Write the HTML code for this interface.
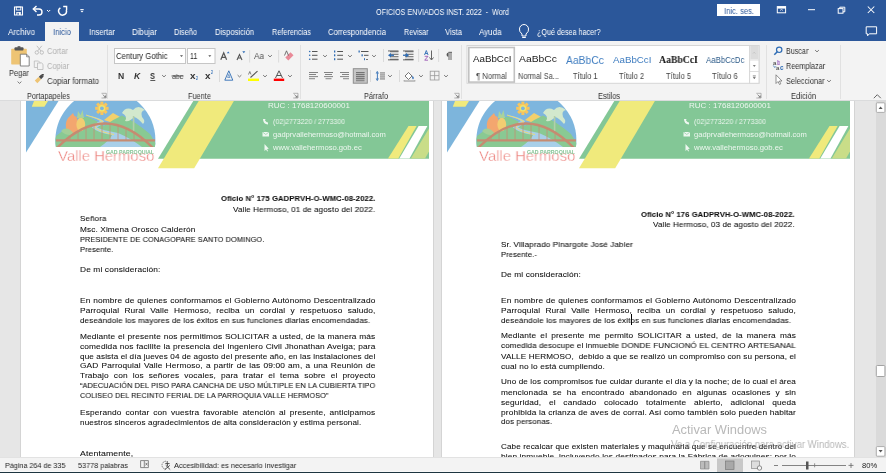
<!DOCTYPE html>
<html><head><meta charset="utf-8"><style>
html,body{margin:0;padding:0;width:886px;height:473px;overflow:hidden;background:#e6e6e6}
body{position:relative;font-family:"Liberation Sans",sans-serif}
.t{position:absolute;white-space:pre;transform-origin:0 0;will-change:transform}
</style></head><body>
<div style="position:absolute;left:0;top:0;width:886px;height:41px;background:#2b579a"></div><div style="position:absolute;left:45px;top:22px;width:34px;height:20px;background:#f3f3f3"></div><div style="position:absolute;left:717px;top:4px;width:43px;height:12px;background:#fff"></div><div style="position:absolute;left:0;top:41px;width:886px;height:60px;background:#f3f3f3"></div><div style="position:absolute;left:0;top:100px;width:886px;height:1px;background:#dadbdc"></div><div style="position:absolute;left:107px;top:45px;width:1px;height:54px;background:#e1e1e1"></div><div style="position:absolute;left:300px;top:45px;width:1px;height:54px;background:#e1e1e1"></div><div style="position:absolute;left:461px;top:45px;width:1px;height:54px;background:#e1e1e1"></div><div style="position:absolute;left:766px;top:45px;width:1px;height:54px;background:#e1e1e1"></div><div style="position:absolute;left:840px;top:45px;width:1px;height:54px;background:#e1e1e1"></div><div style="position:absolute;left:0;top:101px;width:886px;height:357px;background:#e6e6e6"></div><div style="position:absolute;left:20px;top:101px;width:414px;height:357px;background:#fff;border-left:1px solid #d4d4d4;border-right:1px solid #d4d4d4;box-sizing:border-box"></div><div style="position:absolute;left:441px;top:101px;width:414px;height:357px;background:#fff;border-left:1px solid #d4d4d4;border-right:1px solid #d4d4d4;box-sizing:border-box"></div><svg style="position:absolute;left:0;top:0" width="886" height="473" viewBox="0 0 886 473"><defs><clipPath id="docclip"><rect x="0" y="101" width="886" height="357"/></clipPath></defs><g clip-path="url(#docclip)"><g transform="translate(0,0)">
<polygon points="26,101 58.5,101 26,152.5" fill="#7db5dc"/>
<polygon points="34,101 48,101 44.4,106.7 31.8,106.7" fill="#f1ea7d"/>
<clipPath id="cc0"><rect x="40" y="95" width="130" height="52"/></clipPath><clipPath id="cd0"><circle cx="105.4" cy="140" r="50"/></clipPath>
<g clip-path="url(#cc0)">
<circle cx="105.4" cy="140" r="50" fill="#7eb6de"/><g clip-path="url(#cd0)">
<path d="M104 120 L113 113 L122 118 L113 123 Z" fill="#f3d06c"/>
<path d="M52 147 L56 136 Q66 128 76 122 Q84 116 88 117 Q96 120 104 126 Q112 120 122 115.5 Q136 122 150 134 L158 147 Z" fill="#89c993"/>
<path d="M86 115.5 Q96 118 100 121 Q94 124 92 127.5 Q98 133 112 135 Q110 140 100 147 L142 147 Q130 138 118 133 Q102 130 97 127.5 Q103 124 104 121 Q96 116 86 115.5 Z" fill="#a8cfe9"/>
<path d="M86 115 Q97 118 103 121.5 Q95 125 95 127.5 Q100 132 114 134.5" stroke="#f0dc6c" stroke-width="0.9" fill="none"/>
</g><rect x="105.60" y="106.80" width="3" height="3" fill="#f7c55e" transform="rotate(0 107.10 108.30)"/><rect x="104.08" y="110.48" width="3" height="3" fill="#f7c55e" transform="rotate(45 105.58 111.98)"/><rect x="100.40" y="112.00" width="3" height="3" fill="#f7c55e" transform="rotate(90 101.90 113.50)"/><rect x="96.72" y="110.48" width="3" height="3" fill="#f7c55e" transform="rotate(135 98.22 111.98)"/><rect x="95.20" y="106.80" width="3" height="3" fill="#f7c55e" transform="rotate(180 96.70 108.30)"/><rect x="96.72" y="103.12" width="3" height="3" fill="#f7c55e" transform="rotate(225 98.22 104.62)"/><rect x="100.40" y="101.60" width="3" height="3" fill="#f7c55e" transform="rotate(270 101.90 103.10)"/><rect x="104.08" y="103.12" width="3" height="3" fill="#f7c55e" transform="rotate(315 105.58 104.62)"/><circle cx="101.9" cy="108.3" r="4.6" fill="#f7c55e"/><circle cx="101.9" cy="108.3" r="3.2" fill="#f1e56b"/><circle cx="101.9" cy="108.3" r="1.9" fill="#7eb6de"/>
<path d="M68 118 Q72 114 73 113 Q75 118 76 116 Q79 122 78 131 Q72 136 67 131 Q64 124 68 118 Z" fill="#f3a66f"/>
<ellipse cx="80.8" cy="124.5" rx="4.4" ry="6.8" fill="#f2cd72"/>
<path d="M77 118 L78 111 L80.5 115 L82.5 110 L84 118 Z" fill="#a9d39c"/>
<path d="M61 131 Q67 125 74 134 Q67 137 61 131 Z" fill="#a3cf98"/>
<path d="M122 113 Q126 106 133 110 Q138 104 145 110 Q140 111 142 117 Q146 121 143 124 Q138 118 134 117 Q130 122 125 121 Q128 116 122 113 Z" fill="#d2e8cd"/>
<rect x="132.8" y="116" width="1.6" height="15" fill="#b2cfaa"/>
<path d="M57 148 Q105 99 153 148" stroke="#c68b71" stroke-width="2.4" fill="none"/>
<rect x="56" y="139.3" width="99" height="2.2" fill="#c68b71"/>
<path d="M70 136.8 V140 M78 131.6 V140 M86 127.8 V140 M94 125.3 V140 M102 124.1 V140 M110 124.3 V140 M118 125.8 V140 M126 128.6 V140 M134 132.8 V140 M142 138.3 V140 " stroke="#c68b71" stroke-width="0.75" fill="none"/>
</g>
<polygon points="193.3,101 429,101 429,158.7 158,158.7" fill="#83c796"/>
<polygon points="198.7,101 233.9,101 194.2,168.2 158,168.2" fill="#f0ea7c"/>
<polygon points="408.5,126 416.6,126 398.3,158.5 388,158.5" fill="#f0ea7c"/>
<polygon points="418.6,126 427.4,126 409.5,158.5 399.3,158.5" fill="#ffffff"/>
<polygon points="429,128.5 429,151.5 425,158.5 410.8,158.5" fill="#c9dd88"/>
<path d="M263 119 Q263 124 268 124.5 L268 122.5 L266.5 122 L265 120.5 L265.5 119 Z" fill="#eef7f0"/>
<rect x="262.5" y="132" width="6.5" height="4.5" fill="#eef7f0"/>
<path d="M262.5 132 L265.75 134.5 L269 132" stroke="#80c596" stroke-width="0.6" fill="none"/>
<path d="M264.5 144 L264.5 151 L266 149.5 L267.3 151.5 L268 151 L267 149 L268.8 148.8 Z" fill="#eef7f0"/>
</g><g transform="translate(421,0)">
<polygon points="26,101 58.5,101 26,152.5" fill="#7db5dc"/>
<polygon points="34,101 48,101 44.4,106.7 31.8,106.7" fill="#f1ea7d"/>
<clipPath id="cc421"><rect x="40" y="95" width="130" height="52"/></clipPath><clipPath id="cd421"><circle cx="105.4" cy="140" r="50"/></clipPath>
<g clip-path="url(#cc421)">
<circle cx="105.4" cy="140" r="50" fill="#7eb6de"/><g clip-path="url(#cd421)">
<path d="M104 120 L113 113 L122 118 L113 123 Z" fill="#f3d06c"/>
<path d="M52 147 L56 136 Q66 128 76 122 Q84 116 88 117 Q96 120 104 126 Q112 120 122 115.5 Q136 122 150 134 L158 147 Z" fill="#89c993"/>
<path d="M86 115.5 Q96 118 100 121 Q94 124 92 127.5 Q98 133 112 135 Q110 140 100 147 L142 147 Q130 138 118 133 Q102 130 97 127.5 Q103 124 104 121 Q96 116 86 115.5 Z" fill="#a8cfe9"/>
<path d="M86 115 Q97 118 103 121.5 Q95 125 95 127.5 Q100 132 114 134.5" stroke="#f0dc6c" stroke-width="0.9" fill="none"/>
</g><rect x="105.60" y="106.80" width="3" height="3" fill="#f7c55e" transform="rotate(0 107.10 108.30)"/><rect x="104.08" y="110.48" width="3" height="3" fill="#f7c55e" transform="rotate(45 105.58 111.98)"/><rect x="100.40" y="112.00" width="3" height="3" fill="#f7c55e" transform="rotate(90 101.90 113.50)"/><rect x="96.72" y="110.48" width="3" height="3" fill="#f7c55e" transform="rotate(135 98.22 111.98)"/><rect x="95.20" y="106.80" width="3" height="3" fill="#f7c55e" transform="rotate(180 96.70 108.30)"/><rect x="96.72" y="103.12" width="3" height="3" fill="#f7c55e" transform="rotate(225 98.22 104.62)"/><rect x="100.40" y="101.60" width="3" height="3" fill="#f7c55e" transform="rotate(270 101.90 103.10)"/><rect x="104.08" y="103.12" width="3" height="3" fill="#f7c55e" transform="rotate(315 105.58 104.62)"/><circle cx="101.9" cy="108.3" r="4.6" fill="#f7c55e"/><circle cx="101.9" cy="108.3" r="3.2" fill="#f1e56b"/><circle cx="101.9" cy="108.3" r="1.9" fill="#7eb6de"/>
<path d="M68 118 Q72 114 73 113 Q75 118 76 116 Q79 122 78 131 Q72 136 67 131 Q64 124 68 118 Z" fill="#f3a66f"/>
<ellipse cx="80.8" cy="124.5" rx="4.4" ry="6.8" fill="#f2cd72"/>
<path d="M77 118 L78 111 L80.5 115 L82.5 110 L84 118 Z" fill="#a9d39c"/>
<path d="M61 131 Q67 125 74 134 Q67 137 61 131 Z" fill="#a3cf98"/>
<path d="M122 113 Q126 106 133 110 Q138 104 145 110 Q140 111 142 117 Q146 121 143 124 Q138 118 134 117 Q130 122 125 121 Q128 116 122 113 Z" fill="#d2e8cd"/>
<rect x="132.8" y="116" width="1.6" height="15" fill="#b2cfaa"/>
<path d="M57 148 Q105 99 153 148" stroke="#c68b71" stroke-width="2.4" fill="none"/>
<rect x="56" y="139.3" width="99" height="2.2" fill="#c68b71"/>
<path d="M70 136.8 V140 M78 131.6 V140 M86 127.8 V140 M94 125.3 V140 M102 124.1 V140 M110 124.3 V140 M118 125.8 V140 M126 128.6 V140 M134 132.8 V140 M142 138.3 V140 " stroke="#c68b71" stroke-width="0.75" fill="none"/>
</g>
<polygon points="193.3,101 429,101 429,158.7 158,158.7" fill="#83c796"/>
<polygon points="198.7,101 233.9,101 194.2,168.2 158,168.2" fill="#f0ea7c"/>
<polygon points="408.5,126 416.6,126 398.3,158.5 388,158.5" fill="#f0ea7c"/>
<polygon points="418.6,126 427.4,126 409.5,158.5 399.3,158.5" fill="#ffffff"/>
<polygon points="429,128.5 429,151.5 425,158.5 410.8,158.5" fill="#c9dd88"/>
<path d="M263 119 Q263 124 268 124.5 L268 122.5 L266.5 122 L265 120.5 L265.5 119 Z" fill="#eef7f0"/>
<rect x="262.5" y="132" width="6.5" height="4.5" fill="#eef7f0"/>
<path d="M262.5 132 L265.75 134.5 L269 132" stroke="#80c596" stroke-width="0.6" fill="none"/>
<path d="M264.5 144 L264.5 151 L266 149.5 L267.3 151.5 L268 151 L267 149 L268.8 148.8 Z" fill="#eef7f0"/>
</g></g></svg><div style="position:absolute;left:876px;top:101px;width:10px;height:357px;background:#dadada"></div><div style="position:absolute;left:0;top:458px;width:886px;height:14px;background:#f3f3f3;z-index:2"></div><div style="position:absolute;left:0;top:457px;width:886px;height:1px;background:#e2e2e2;z-index:2"></div><div style="position:absolute;left:0;top:471px;width:886px;height:1px;background:#f8f8f8;z-index:2"></div><div style="position:absolute;left:0;top:472px;width:886px;height:1px;background:#1d3540;z-index:2"></div><svg style="position:absolute;left:0;top:0" width="886" height="473" viewBox="0 0 886 473"><path d="M14.5 7 H22.5 V15 H14.5 Z" stroke="#ffffff" stroke-width="1.1" fill="none"/><rect x="16.3" y="7" width="4.5" height="3" stroke="#ffffff" stroke-width="0.9" fill="none"/><rect x="16.3" y="12" width="4.5" height="3" fill="#ffffff"/><rect x="17.5" y="12.8" width="1.2" height="2" fill="#2b579a"/><path d="M34 9 H39 A3 3 0 0 1 39 15 H37" stroke="#ffffff" stroke-width="1.4" fill="none"/><path d="M36.5 6 L33.3 9 L36.5 12" stroke="#ffffff" stroke-width="1.4" fill="none"/><path d="M47 10 L48.6 11.6 L50.2 10" stroke="#ffffff" stroke-width="1" fill="none"/><path d="M60.4 7.9 A3.9 3.9 0 1 0 66.3 10" stroke="#ffffff" stroke-width="1.5" fill="none"/><path d="M63.2 6.5 H66.6 V10" stroke="#ffffff" stroke-width="1.4" fill="none"/><rect x="80.3" y="9" width="3.4" height="0.9" fill="#ffffff"/><path d="M80.3 10.8 L83.7 10.8 L82 12.5 Z" fill="#ffffff"/><rect x="777.3" y="6.6" width="8.3" height="6.2" stroke="#ffffff" stroke-width="1" fill="none"/><rect x="777.3" y="6.6" width="8.3" height="2" fill="#ffffff"/><path d="M780 10.5 L781.5 9.5 L783 10.5" stroke="#ffffff" stroke-width="0.7" fill="none"/><rect x="808" y="9.2" width="7" height="1" fill="#ffffff"/><rect x="838.2" y="8.6" width="4.8" height="4.6" stroke="#ffffff" stroke-width="1" fill="none"/><path d="M839.8 8.6 V7.2 H844.8 V11.8 H843" stroke="#ffffff" stroke-width="1" fill="none"/><path d="M867.8 6.5 L874.3 13 M874.3 6.5 L867.8 13" stroke="#ffffff" stroke-width="1.05" fill="none"/><path d="M866.2 26.8 H876.6 V33.8 H869.3 L867.6 35.8 V33.8 H866.2 Z" stroke="#ffffff" stroke-width="1" fill="none"/><path d="M522 36 V34 Q519 31.5 519.5 29 A4.5 4.5 0 0 1 528.5 29 Q529 31.5 526 34 V36 Z" stroke="#ffffff" stroke-width="1" fill="none"/><rect x="522.2" y="37" width="3.6" height="1" fill="#ffffff"/><rect x="11.2" y="48.8" width="15.6" height="15.6" rx="0.6" fill="#eec474"/><rect x="14.5" y="47.2" width="9" height="3.2" rx="1" fill="#555"/><rect x="17.6" y="46.2" width="2.8" height="1.6" fill="#555"/><path d="M20.3 54.2 H26.6 L29.2 56.8 V66 H20.3 Z" fill="#fff" stroke="#6a6a6a" stroke-width="0.8"/><path d="M26.6 54.2 V56.8 H29.2" fill="none" stroke="#6a6a6a" stroke-width="0.7"/><path d="M17.6 81.6 L19.5 83.4 L21.4 81.6" stroke="#666" stroke-width="0.85" fill="none"/><circle cx="36.8" cy="52.5" r="1.7" stroke="#b9b9b9" stroke-width="0.9" fill="none"/><circle cx="41.8" cy="52.5" r="1.7" stroke="#b9b9b9" stroke-width="0.9" fill="none"/><path d="M37.6 51 L41.8 45.8 M41 51 L36.8 45.8" stroke="#b9b9b9" stroke-width="0.9" fill="none"/><path d="M34.3 61 H38.5 L39.8 62.3 V67.5 H34.3 Z" stroke="#b9b9b9" stroke-width="0.8" fill="#f3f3f3"/><path d="M37.5 63 H41.7 L43 64.3 V69.5 H37.5 Z" stroke="#b9b9b9" stroke-width="0.8" fill="#f3f3f3"/><path d="M34.8 80.5 L38.5 77 L41 79.6 L37.3 83.2 Z" fill="#eec474"/><path d="M38.8 76.8 L41.5 74.2 L43.7 76.4 L41.1 79.2 Z" fill="#4a4a4a"/><rect x="42" y="74" width="1.8" height="1.6" fill="#4a4a4a"/><path d="M101.5 93.3 H106.3 V98 H101.5" stroke="#888" stroke-width="0.6" fill="none"/><path d="M102.7 94.6 L105.5 97.2 M105.5 95.5 V97.2 H103.8" stroke="#666" stroke-width="0.7" fill="none"/><path d="M293.2 93.3 H298.0 V98 H293.2" stroke="#888" stroke-width="0.6" fill="none"/><path d="M294.4 94.6 L297.2 97.2 M297.2 95.5 V97.2 H295.5" stroke="#666" stroke-width="0.7" fill="none"/><path d="M454.3 93.3 H459.1 V98 H454.3" stroke="#888" stroke-width="0.6" fill="none"/><path d="M455.5 94.6 L458.3 97.2 M458.3 95.5 V97.2 H456.6" stroke="#666" stroke-width="0.7" fill="none"/><path d="M756.3 93.3 H761.0999999999999 V98 H756.3" stroke="#888" stroke-width="0.6" fill="none"/><path d="M757.5 94.6 L760.3 97.2 M760.3 95.5 V97.2 H758.5999999999999" stroke="#666" stroke-width="0.7" fill="none"/><rect x="114.5" y="48.5" width="71" height="15" fill="#fff" stroke="#c6c6c6" stroke-width="1"/><rect x="187.5" y="48.5" width="27.5" height="15" fill="#fff" stroke="#c6c6c6" stroke-width="1"/><path d="M180 55.3 H183 L181.5 57 Z" fill="#555"/><path d="M208.3 55.3 H211.3 L209.8 57 Z" fill="#555"/><path d="M220.8 59.8 L223.7 52.8 L226.6 59.8 M221.9 57.4 H225.5" stroke="#555" stroke-width="1.2" fill="none"/><path d="M226.8 53.3 L228.2 51.4 L229.6 53.3 Z" fill="#2f6db5"/><path d="M237 60 L239.5 54.5 L242 60 M238 58 H241" stroke="#555" stroke-width="1.1" fill="none"/><path d="M242.3 51.3 H245.3 L243.8 53.3 Z" fill="#2f6db5"/><rect x="249.3" y="50" width="0.8" height="12.5" fill="#d4d4d4"/><rect x="278.3" y="50" width="0.8" height="12.5" fill="#d4d4d4"/><path d="M268.1 55.1 L270 56.9 L271.9 55.1" stroke="#666" stroke-width="0.85" fill="none"/><path d="M285.3 57.5 L290.5 52.3 L293.5 55.3 L288.3 60.5 Z" fill="#e98a98"/><path d="M284.5 55.5 L286.5 50.8 L288.5 55.5" stroke="#555" stroke-width="0.8" fill="none"/><rect x="150.3" y="80" width="5" height="0.8" fill="#333"/><path d="M162.1 75.1 L164 76.9 L165.9 75.1" stroke="#666" stroke-width="0.85" fill="none"/><rect x="171.5" y="75.6" width="12" height="0.8" fill="#444"/><rect x="219" y="70" width="0.8" height="12" fill="#d4d4d4"/><path d="M224.8 80.2 L228.8 70.8 L232.8 80.2 Z" stroke="#2f6db5" stroke-width="0.9" fill="none" stroke-linejoin="round"/><path d="M227.6 77.5 L228.8 74.3 L230 77.5 Z" stroke="#2f6db5" stroke-width="0.6" fill="none"/><path d="M237.6 75.1 L239.5 76.9 L241.4 75.1" stroke="#666" stroke-width="0.85" fill="none"/><rect x="248" y="78.6" width="11" height="2.4" fill="#ffff00"/><path d="M250.5 77.5 L257.5 71.2" stroke="#555" stroke-width="1.1" fill="none"/><path d="M248.5 74.5 L249.8 71.5 L251 74.5" stroke="#555" stroke-width="0.7" fill="none"/><path d="M263.1 75.1 L265 76.9 L266.9 75.1" stroke="#666" stroke-width="0.85" fill="none"/><rect x="273.8" y="78.6" width="10.4" height="2.4" fill="#ff0000"/><path d="M275.5 78 L279 70.8 L282.5 78 M276.8 75.5 H281.2" stroke="#555" stroke-width="1" fill="none"/><path d="M288.1 75.1 L290 76.9 L291.9 75.1" stroke="#666" stroke-width="0.85" fill="none"/><circle cx="309.7" cy="51.5" r="0.8" fill="#2f6db5"/><rect x="312" y="51.0" width="5.5" height="1" fill="#555"/><rect x="334" y="50.5" width="1.3" height="2" fill="#2f6db5"/><rect x="337.2" y="51.0" width="5.8" height="1" fill="#555"/><circle cx="309.7" cy="55.3" r="0.8" fill="#2f6db5"/><rect x="312" y="54.8" width="5.5" height="1" fill="#555"/><rect x="334" y="54.3" width="1.3" height="2" fill="#2f6db5"/><rect x="337.2" y="54.8" width="5.8" height="1" fill="#555"/><circle cx="309.7" cy="59.2" r="0.8" fill="#2f6db5"/><rect x="312" y="58.7" width="5.5" height="1" fill="#555"/><rect x="334" y="58.2" width="1.3" height="2" fill="#2f6db5"/><rect x="337.2" y="58.7" width="5.8" height="1" fill="#555"/><rect x="358.5" y="50.5" width="1.3" height="2" fill="#2f6db5"/><rect x="361" y="51" width="7.5" height="1" fill="#555"/><rect x="361.5" y="54.3" width="1.3" height="2" fill="#2f6db5"/><rect x="364" y="54.8" width="4.5" height="1" fill="#555"/><rect x="364" y="58.2" width="1" height="2" fill="#2f6db5"/><rect x="366" y="59" width="2" height="0.8" fill="#555"/><path d="M323.1 55.1 L325 56.9 L326.9 55.1" stroke="#666" stroke-width="0.85" fill="none"/><path d="M348.1 55.1 L350 56.9 L351.9 55.1" stroke="#666" stroke-width="0.85" fill="none"/><path d="M372.1 55.1 L374 56.9 L375.9 55.1" stroke="#666" stroke-width="0.85" fill="none"/><rect x="383" y="49" width="0.8" height="13" fill="#d4d4d4"/><rect x="390" y="51.3" width="8.5" height="0.9" fill="#555"/><rect x="390" y="53.8" width="8.5" height="0.9" fill="#555"/><rect x="390" y="56.3" width="8.5" height="0.9" fill="#555"/><rect x="390" y="58.8" width="8.5" height="0.9" fill="#555"/><rect x="388" y="50.5" width="10.5" height="0.9" fill="#555"/><rect x="388" y="59.4" width="10.5" height="0.9" fill="#555"/><path d="M388 55.2 L391 53 V57.4 Z" fill="#2f6db5"/><rect x="390" y="54.6" width="4" height="1.3" fill="#2f6db5"/><rect x="405" y="51.3" width="8.5" height="0.9" fill="#555"/><rect x="405" y="53.8" width="8.5" height="0.9" fill="#555"/><rect x="405" y="56.3" width="8.5" height="0.9" fill="#555"/><rect x="405" y="58.8" width="8.5" height="0.9" fill="#555"/><rect x="403" y="50.5" width="10.5" height="0.9" fill="#555"/><rect x="403" y="59.4" width="10.5" height="0.9" fill="#555"/><path d="M409 55.2 L406 53 V57.4 Z" fill="#2f6db5"/><rect x="403" y="54.6" width="4" height="1.3" fill="#2f6db5"/><rect x="418.3" y="49" width="0.8" height="13" fill="#d4d4d4"/><path d="M424.5 55 L426.3 50.5 L428.1 55 M425.2 53.5 H427.4" stroke="#2f6db5" stroke-width="0.9" fill="none"/><path d="M424.7 56.3 H428 L424.7 60.2 H428" stroke="#9b59b6" stroke-width="0.9" fill="none"/><path d="M431.5 50.5 V59.5 M429.5 57.5 L431.5 60 L433.5 57.5" stroke="#555" stroke-width="0.9" fill="none"/><rect x="438.3" y="49" width="0.8" height="13" fill="#d4d4d4"/><path d="M448.3 52.5 A2.2 2.2 0 0 0 448.3 56.8 Z" fill="#555"/><path d="M448.5 52.3 H452 M449 52.3 V60 M451 52.3 V60" stroke="#555" stroke-width="0.9" fill="none"/><rect x="309" y="72.0" width="9" height="0.9" fill="#777"/><rect x="309" y="74.1" width="7" height="0.9" fill="#777"/><rect x="309" y="76.2" width="9" height="0.9" fill="#777"/><rect x="309" y="78.3" width="6" height="0.9" fill="#777"/><rect x="324" y="72.0" width="9" height="0.9" fill="#777"/><rect x="325" y="74.1" width="7" height="0.9" fill="#777"/><rect x="324" y="76.2" width="9" height="0.9" fill="#777"/><rect x="325.5" y="78.3" width="6" height="0.9" fill="#777"/><rect x="340" y="72.0" width="9" height="0.9" fill="#777"/><rect x="342" y="74.1" width="7" height="0.9" fill="#777"/><rect x="340" y="76.2" width="9" height="0.9" fill="#777"/><rect x="343" y="78.3" width="6" height="0.9" fill="#777"/><rect x="353.3" y="68.7" width="14" height="14.5" fill="#c6c6c6" stroke="#8f8f8f" stroke-width="1"/><rect x="356" y="72.0" width="8.5" height="0.9" fill="#777"/><rect x="356" y="74.1" width="8.5" height="0.9" fill="#777"/><rect x="356" y="76.2" width="8.5" height="0.9" fill="#777"/><rect x="356" y="78.3" width="8.5" height="0.9" fill="#777"/><rect x="356" y="72.3" width="8.5" height="0.9" fill="#6f6f6f"/><rect x="356" y="74.3" width="8.5" height="0.9" fill="#6f6f6f"/><rect x="356" y="76.3" width="8.5" height="0.9" fill="#6f6f6f"/><rect x="356" y="78.3" width="8.5" height="0.9" fill="#6f6f6f"/><rect x="356" y="80.3" width="8.5" height="0.9" fill="#6f6f6f"/><rect x="370" y="70" width="0.8" height="12" fill="#d4d4d4"/><path d="M376.3 73.5 L377.3 71.5 L378.3 73.5 M376.3 78.5 L377.3 80.5 L378.3 78.5" stroke="#2f6db5" stroke-width="1" fill="none"/><rect x="376.9" y="73" width="0.9" height="6" fill="#2f6db5"/><rect x="380" y="72.5" width="5" height="0.9" fill="#666"/><rect x="380" y="74.5" width="5" height="0.9" fill="#666"/><rect x="380" y="76.5" width="5" height="0.9" fill="#666"/><rect x="380" y="78.5" width="5" height="0.9" fill="#666"/><path d="M388.1 75.1 L390 76.9 L391.9 75.1" stroke="#666" stroke-width="0.85" fill="none"/><rect x="399" y="70" width="0.8" height="12" fill="#d4d4d4"/><path d="M405 76 L408.5 72.5 L412 76 L408.5 79.5 Z" stroke="#555" stroke-width="0.8" fill="#fff"/><path d="M412.5 75.5 Q414.5 77.5 413 79.5 Q411.5 78 412.5 75.5Z" fill="#2f6db5"/><rect x="404" y="80.3" width="11" height="1.3" fill="#fff" stroke="#888" stroke-width="0.5"/><path d="M419.1 75.1 L421 76.9 L422.9 75.1" stroke="#666" stroke-width="0.85" fill="none"/><rect x="430.2" y="71.2" width="8.8" height="8.8" stroke="#999" stroke-width="0.8" fill="none"/><path d="M434.6 71.2 V80 M430.2 75.6 H439" stroke="#999" stroke-width="0.8"/><path d="M444.1 75.1 L446 76.9 L447.9 75.1" stroke="#666" stroke-width="0.85" fill="none"/><rect x="467" y="45.5" width="292" height="37.8" fill="#fff" stroke="#d6d6d6" stroke-width="1"/><rect x="468.8" y="47.5" width="45.5" height="34.6" fill="#fff" stroke="#c2c2c2" stroke-width="1.6"/><rect x="749.6" y="45.5" width="9.4" height="37.8" fill="#fff" stroke="#d6d6d6" stroke-width="1"/><rect x="750.2" y="46" width="8.4" height="13.3" fill="#dcdcdc"/><path d="M753 53.5 L754.2 52.3 L755.4 53.5" stroke="#b4b4b4" stroke-width="0.6" fill="none"/><rect x="749.6" y="59.6" width="9.4" height="0.8" fill="#d6d6d6"/><rect x="749.6" y="71.2" width="9.4" height="0.8" fill="#d6d6d6"/><path d="M752.8 65.2 H755.8 L754.3 66.8 Z" fill="#555"/><rect x="752.8" y="75.6" width="3" height="0.7" fill="#555"/><path d="M752.8 77.3 H755.8 L754.3 78.9 Z" fill="#555"/><circle cx="779.2" cy="49.8" r="2.7" stroke="#2f6db5" stroke-width="1.2" fill="none"/><path d="M777.3 51.8 L774.3 54.7" stroke="#2f6db5" stroke-width="1.5"/><path d="M815.1 50.1 L817 51.9 L818.9 50.1" stroke="#666" stroke-width="0.85" fill="none"/><path d="M773.3 65.5 L774.8 67.5 L776 66.3" stroke="#2f6db5" stroke-width="0.8" fill="none"/><path d="M827.1 80.1 L829 81.9 L830.9 80.1" stroke="#666" stroke-width="0.85" fill="none"/><path d="M776 74.8 V83.5 L778 81.5 L779.5 84.5 L780.8 83.8 L779.4 81 H782 Z" stroke="#666" stroke-width="0.7" fill="#fff"/><path d="M873.8 98.2 L877.3 94.7 L880.8 98.2" stroke="#555" stroke-width="0.9" fill="none"/></svg><svg style="position:absolute;left:0;top:0;z-index:3" width="886" height="473" viewBox="0 0 886 473"><path d="M140.6 460.6 H144.3 V467.6 H140.6 Z M144.3 460.6 H148.4 V467.6 H144.3" stroke="#666" stroke-width="0.75" fill="none"/><path d="M145.6 462.8 L147.4 465.4 M147.4 462.8 L145.6 465.4" stroke="#555" stroke-width="0.7"/><path d="M166 461.2 A4 4 0 0 0 166 469.2" stroke="#666" stroke-width="0.8" fill="none" stroke-dasharray="1.6 0.7"/><circle cx="167.3" cy="462" r="0.8" fill="#444"/><path d="M165.3 463.6 L169.6 463.6 M167.4 463.4 L167.4 466 M164.8 469.6 L169.8 465.4 M165.8 465.4 L170.2 469.6" stroke="#333" stroke-width="0.85" fill="none"/><rect x="717" y="458.5" width="26" height="13.5" fill="#c8c8c8"/><path d="M700.5 461.3 H704.7 V469 H700.5 Z M704.7 461.3 H709 V469 H704.7 Z" stroke="#8a8a8a" stroke-width="0.7" fill="#bbb"/><rect x="725.5" y="461" width="8.5" height="8.5" stroke="#7a7a7a" stroke-width="0.7" fill="#a8a8a8"/><rect x="751.5" y="461" width="8" height="7.5" stroke="#8a8a8a" stroke-width="0.7" fill="#ddd"/><circle cx="759.5" cy="468" r="2.2" stroke="#666" stroke-width="0.7" fill="#f3f3f3"/><rect x="774" y="465" width="4" height="0.8" fill="#666"/><rect x="782" y="465" width="64" height="0.9" fill="#777"/><rect x="806" y="461.5" width="2.5" height="8" fill="#555"/><rect x="814.3" y="463.3" width="0.8" height="4" fill="#777"/><path d="M848.5 465.4 H853.5 M851 463 V468" stroke="#666" stroke-width="0.8"/><rect x="876.3" y="102.8" width="8.6" height="9.6" rx="1" fill="#fff" stroke="#9a9a9a" stroke-width="0.8"/><path d="M878.6 109 L880.6 106.5 L882.6 109 Z" fill="#555"/><rect x="876.3" y="446.6" width="8.6" height="9.6" rx="1" fill="#fff" stroke="#9a9a9a" stroke-width="0.8"/><path d="M878.6 450 L880.6 452.5 L882.6 450 Z" fill="#555"/><rect x="876.3" y="365.5" width="8.6" height="11" rx="1" fill="#fff" stroke="#9a9a9a" stroke-width="0.9"/></svg><div style="position:absolute;left:631px;top:314px;width:1px;height:11px;background:#000"></div>
<div class="t" style="left:376.00px;top:7.00px;font-size:8.6px;line-height:10.75px;color:#fff;transform:scaleX(0.8321);">OFICIOS ENVIADOS INST. 2022  -  Word</div><div class="t" style="left:8.00px;top:27.00px;font-size:8.6px;line-height:10.75px;color:#fff;transform:scaleX(0.9422);">Archivo</div><div class="t" style="left:88.50px;top:27.00px;font-size:8.6px;line-height:10.75px;color:#fff;transform:scaleX(0.8922);">Insertar</div><div class="t" style="left:131.50px;top:27.00px;font-size:8.6px;line-height:10.75px;color:#fff;transform:scaleX(0.9180);">Dibujar</div><div class="t" style="left:174.00px;top:27.00px;font-size:8.6px;line-height:10.75px;color:#fff;transform:scaleX(0.8593);">Diseño</div><div class="t" style="left:215.00px;top:27.00px;font-size:8.6px;line-height:10.75px;color:#fff;transform:scaleX(0.8873);">Disposición</div><div class="t" style="left:272.00px;top:27.00px;font-size:8.6px;line-height:10.75px;color:#fff;transform:scaleX(0.8504);">Referencias</div><div class="t" style="left:328.00px;top:27.00px;font-size:8.6px;line-height:10.75px;color:#fff;transform:scaleX(0.8861);">Correspondencia</div><div class="t" style="left:404.00px;top:27.00px;font-size:8.6px;line-height:10.75px;color:#fff;transform:scaleX(0.8408);">Revisar</div><div class="t" style="left:445.00px;top:27.00px;font-size:8.6px;line-height:10.75px;color:#fff;transform:scaleX(0.8969);">Vista</div><div class="t" style="left:479.00px;top:27.00px;font-size:8.6px;line-height:10.75px;color:#fff;transform:scaleX(0.9290);">Ayuda</div><div class="t" style="left:537.00px;top:27.00px;font-size:8.6px;line-height:10.75px;color:#fff;transform:scaleX(0.8359);">¿Qué desea hacer?</div><div class="t" style="left:53.00px;top:27.00px;font-size:8.6px;line-height:10.75px;color:#2b579a;transform:scaleX(0.8972);">Inicio</div><div class="t" style="left:724.00px;top:6.00px;font-size:8.6px;line-height:10.75px;color:#2b579a;transform:scaleX(0.8844);">Inic. ses.</div><div class="t" style="left:27.00px;top:91.00px;font-size:8.6px;line-height:10.75px;color:#333;transform:scaleX(0.8489);">Portapapeles</div><div class="t" style="left:188.00px;top:91.00px;font-size:8.6px;line-height:10.75px;color:#333;transform:scaleX(0.8593);">Fuente</div><div class="t" style="left:364.00px;top:91.00px;font-size:8.6px;line-height:10.75px;color:#333;transform:scaleX(0.8514);">Párrafo</div><div class="t" style="left:598.00px;top:91.00px;font-size:8.6px;line-height:10.75px;color:#333;transform:scaleX(0.8691);">Estilos</div><div class="t" style="left:791.00px;top:91.00px;font-size:8.6px;line-height:10.75px;color:#333;transform:scaleX(0.8869);">Edición</div><div class="t" style="left:9.00px;top:68.00px;font-size:8.6px;line-height:10.75px;color:#333;transform:scaleX(0.8719);">Pegar</div><div class="t" style="left:47.00px;top:46.00px;font-size:8.6px;line-height:10.75px;color:#b1b1b1;transform:scaleX(0.8790);">Cortar</div><div class="t" style="left:47.00px;top:61.00px;font-size:8.6px;line-height:10.75px;color:#b1b1b1;transform:scaleX(0.8686);">Copiar</div><div class="t" style="left:47.00px;top:76.00px;font-size:8.6px;line-height:10.75px;color:#333;transform:scaleX(0.9148);">Copiar formato</div><div class="t" style="left:785.80px;top:46.00px;font-size:8.6px;line-height:10.75px;color:#333;transform:scaleX(0.8336);">Buscar</div><div class="t" style="left:785.80px;top:61.00px;font-size:8.6px;line-height:10.75px;color:#333;transform:scaleX(0.8437);">Reemplazar</div><div class="t" style="left:785.80px;top:76.00px;font-size:8.6px;line-height:10.75px;color:#333;transform:scaleX(0.8596);">Seleccionar</div><div class="t" style="left:267.60px;top:101.00px;font-size:7.7px;line-height:9.625px;color:#eef7f0;transform:scaleX(1.0425);">RUC : 1768120600001</div><div class="t" style="left:273.30px;top:117.00px;font-size:7.2px;line-height:9.0px;color:#eef7f0;transform:scaleX(0.9632);">(02)2773220 / 2773300</div><div class="t" style="left:273.30px;top:130.00px;font-size:7.2px;line-height:9.0px;color:#eef7f0;transform:scaleX(1.0525);">gadprvallehermoso@hotmail.com</div><div class="t" style="left:273.30px;top:143.00px;font-size:7.2px;line-height:9.0px;color:#eef7f0;transform:scaleX(1.0635);">www.vallehermoso.gob.ec</div><div class="t" style="left:57.60px;top:147.00px;font-size:15px;line-height:18.75px;color:#ec827d;transform:scaleX(0.9901);-webkit-text-stroke:0.35px #fff">Valle Hermoso</div><div class="t" style="left:106.40px;top:150.00px;font-size:4.8px;line-height:6.0px;color:#86c596;transform:scaleX(1.0936);font-weight:bold">GAD PARROQUIAL</div><div class="t" style="left:688.60px;top:101.00px;font-size:7.7px;line-height:9.625px;color:#eef7f0;transform:scaleX(1.0425);">RUC : 1768120600001</div><div class="t" style="left:694.30px;top:117.00px;font-size:7.2px;line-height:9.0px;color:#eef7f0;transform:scaleX(0.9632);">(02)2773220 / 2773300</div><div class="t" style="left:694.30px;top:130.00px;font-size:7.2px;line-height:9.0px;color:#eef7f0;transform:scaleX(1.0525);">gadprvallehermoso@hotmail.com</div><div class="t" style="left:694.30px;top:143.00px;font-size:7.2px;line-height:9.0px;color:#eef7f0;transform:scaleX(1.0635);">www.vallehermoso.gob.ec</div><div class="t" style="left:478.60px;top:147.00px;font-size:15px;line-height:18.75px;color:#ec827d;transform:scaleX(0.9901);-webkit-text-stroke:0.35px #fff">Valle Hermoso</div><div class="t" style="left:527.40px;top:150.00px;font-size:4.8px;line-height:6.0px;color:#86c596;transform:scaleX(1.0936);font-weight:bold">GAD PARROQUIAL</div><div class="t" style="left:5.00px;top:461.00px;font-size:7.6px;line-height:9.5px;color:#222;transform:scaleX(0.9472);z-index:3">Página 264 de 335</div><div class="t" style="left:77.60px;top:461.00px;font-size:7.6px;line-height:9.5px;color:#222;transform:scaleX(0.9549);z-index:3">53778 palabras</div><div class="t" style="left:174.40px;top:461.00px;font-size:7.6px;line-height:9.5px;color:#222;transform:scaleX(0.9690);z-index:3">Accesibilidad: es necesario investigar</div><div class="t" style="left:862.00px;top:461.00px;font-size:7.6px;line-height:9.5px;color:#222;transform:scaleX(0.9866);z-index:3">80%</div><div class="t" style="left:116.20px;top:51.00px;font-size:8.6px;line-height:10.75px;color:#222;transform:scaleX(0.9001);">Century Gothic</div><div class="t" style="left:190.00px;top:51.00px;font-size:8.6px;line-height:10.75px;color:#222;transform:scaleX(0.8070);">11</div><div class="t" style="left:254.00px;top:51.00px;font-size:8.6px;line-height:10.75px;color:#555;transform:scaleX(0.9510);">Aa</div><div class="t" style="left:118.00px;top:71.00px;font-size:8.6px;line-height:10.75px;color:#333;transform:scaleX(0.9970);font-weight:bold">N</div><div class="t" style="left:133.80px;top:71.00px;font-size:8.6px;line-height:10.75px;color:#333;transform:scaleX(0.9327);font-weight:bold;font-style:italic">K</div><div class="t" style="left:150.30px;top:71.00px;font-size:8.6px;line-height:10.75px;color:#333;transform:scaleX(0.8719);font-weight:bold">S</div><div class="t" style="left:172.00px;top:72.00px;font-size:8px;line-height:10.0px;color:#444;transform:scaleX(0.8934);letter-spacing:-0.2px">abc</div><div class="t" style="left:190.00px;top:71.00px;font-size:8.5px;line-height:10.625px;color:#333;transform:scaleX(1.1617);font-weight:bold">x</div><div class="t" style="left:196.00px;top:76.00px;font-size:4.5px;line-height:5.625px;color:#2f6db5;transform:scaleX(0.7950);font-weight:bold">2</div><div class="t" style="left:205.00px;top:71.00px;font-size:8.5px;line-height:10.625px;color:#333;transform:scaleX(1.1617);font-weight:bold">x</div><div class="t" style="left:211.00px;top:70.00px;font-size:4.5px;line-height:5.625px;color:#2f6db5;transform:scaleX(0.7950);font-weight:bold">2</div><div class="t" style="left:472.50px;top:53.00px;font-size:9.5px;line-height:11.875px;color:#222;transform:scaleX(1.0267);">AaBbCcI</div><div class="t" style="left:476.00px;top:71.00px;font-size:8.6px;line-height:10.75px;color:#444;transform:scaleX(0.8933);">¶ Normal</div><div class="t" style="left:519.00px;top:53.00px;font-size:9.5px;line-height:11.875px;color:#222;transform:scaleX(1.0901);">AaBbCc</div><div class="t" style="left:518.00px;top:71.00px;font-size:8.6px;line-height:10.75px;color:#444;transform:scaleX(0.8584);">Normal Sa...</div><div class="t" style="left:566.20px;top:53.00px;font-size:11.5px;line-height:14.375px;color:#3f7dc0;transform:scaleX(0.8960);">AaBbCc</div><div class="t" style="left:572.60px;top:71.00px;font-size:8.6px;line-height:10.75px;color:#444;transform:scaleX(0.8510);">Título 1</div><div class="t" style="left:612.50px;top:54.00px;font-size:9.5px;line-height:11.875px;color:#3f7dc0;transform:scaleX(1.0240);">AaBbCcI</div><div class="t" style="left:619.00px;top:71.00px;font-size:8.6px;line-height:10.75px;color:#444;transform:scaleX(0.8719);">Título 2</div><div class="t" style="left:659.20px;top:54.00px;font-size:10px;line-height:12.5px;color:#111;transform:scaleX(0.9721);font-family:'Liberation Serif';font-weight:bold">AaBbCcI</div><div class="t" style="left:666.00px;top:71.00px;font-size:8.6px;line-height:10.75px;color:#444;transform:scaleX(0.8719);">Título 5</div><div class="t" style="left:705.80px;top:55.00px;font-size:9px;line-height:11.25px;color:#2e5c8a;transform:scaleX(0.8724);">AaBbCcDc</div><div class="t" style="left:712.30px;top:71.00px;font-size:8.6px;line-height:10.75px;color:#444;transform:scaleX(0.8963);">Título 6</div><div class="t" style="left:773.20px;top:60.00px;font-size:6px;line-height:7.5px;color:#555;transform:scaleX(0.8972);font-weight:bold">a</div><div class="t" style="left:776.50px;top:59.00px;font-size:6.4px;line-height:8.0px;color:#9b5fc0;transform:scaleX(0.8192);font-weight:bold">b</div><div class="t" style="left:776.30px;top:65.00px;font-size:6px;line-height:7.5px;color:#555;transform:scaleX(0.8972);font-weight:bold">a</div><div class="t" style="left:779.50px;top:64.00px;font-size:6.4px;line-height:8.0px;color:#2f6db5;transform:scaleX(0.8982);font-weight:bold">c</div><div class="t" style="left:220.50px;top:194.00px;font-size:8.1px;line-height:10.125px;color:#111;transform:scaleX(0.9450);font-weight:bold;letter-spacing:0.12px;-webkit-text-stroke:0.08px #000">Oficio N° 175 GADPRVH-O-WMC-08-2022.</div><div class="t" style="left:232.70px;top:205.00px;font-size:8.1px;line-height:10.125px;color:#111;transform:scaleX(0.9897);letter-spacing:0.12px;-webkit-text-stroke:0.08px #000">Valle Hermoso, 01 de agosto del 2022.</div><div class="t" style="left:79.60px;top:214.00px;font-size:8.1px;line-height:10.125px;color:#111;transform:scaleX(0.9840);letter-spacing:0.12px;-webkit-text-stroke:0.08px #000">Señora</div><div class="t" style="left:79.60px;top:225.00px;font-size:8.1px;line-height:10.125px;color:#111;transform:scaleX(1.0172);letter-spacing:0.12px;-webkit-text-stroke:0.08px #000">Msc. Ximena Orosco Calderón</div><div class="t" style="left:79.60px;top:235.00px;font-size:8.1px;line-height:10.125px;color:#111;transform:scaleX(0.9057);letter-spacing:0.12px;-webkit-text-stroke:0.08px #000">PRESIDENTE DE CONAGOPARE SANTO DOMINGO.</div><div class="t" style="left:79.60px;top:245.00px;font-size:8.1px;line-height:10.125px;color:#111;transform:scaleX(0.9347);letter-spacing:0.12px;-webkit-text-stroke:0.08px #000">Presente.</div><div class="t" style="left:79.60px;top:265.00px;font-size:8.1px;line-height:10.125px;color:#111;transform:scaleX(1.0310);letter-spacing:0.12px;-webkit-text-stroke:0.08px #000">De mi consideración:</div><div class="t" style="left:79.60px;top:296.00px;font-size:8.1px;line-height:10.125px;color:#111;transform:scaleX(1.0300);word-spacing:0.340px;letter-spacing:0.12px;-webkit-text-stroke:0.08px #000">En nombre de quienes conformamos el Gobierno Autónomo Descentralizado</div><div class="t" style="left:79.60px;top:306.00px;font-size:8.1px;line-height:10.125px;color:#111;transform:scaleX(1.0300);word-spacing:2.707px;letter-spacing:0.12px;-webkit-text-stroke:0.08px #000">Parroquial Rural Valle Hermoso, reciba un cordial y respetuoso saludo,</div><div class="t" style="left:79.60px;top:316.00px;font-size:8.1px;line-height:10.125px;color:#111;transform:scaleX(0.9914);letter-spacing:0.12px;-webkit-text-stroke:0.08px #000">deseándole los mayores de los éxitos en sus funciones diarias encomendadas.</div><div class="t" style="left:79.60px;top:332.00px;font-size:8.1px;line-height:10.125px;color:#111;transform:scaleX(1.0300);word-spacing:0.283px;letter-spacing:0.12px;-webkit-text-stroke:0.08px #000">Mediante el presente nos permitimos SOLICITAR a usted, de la manera más</div><div class="t" style="left:79.60px;top:342.00px;font-size:8.1px;line-height:10.125px;color:#111;transform:scaleX(1.0300);word-spacing:0.234px;letter-spacing:0.12px;-webkit-text-stroke:0.08px #000">comedida nos facilite la presencia del Ingeniero Civil Jhonathan Aveiga; para</div><div class="t" style="left:79.60px;top:352.00px;font-size:8.1px;line-height:10.125px;color:#111;transform:scaleX(1.0048);letter-spacing:0.12px;-webkit-text-stroke:0.08px #000">que asista el día jueves 04 de agosto del presente año, en las instalaciones del</div><div class="t" style="left:79.60px;top:361.00px;font-size:8.1px;line-height:10.125px;color:#111;transform:scaleX(1.0300);word-spacing:0.678px;letter-spacing:0.12px;-webkit-text-stroke:0.08px #000">GAD Parroquial Valle Hermoso, a partir de las 09:00 am, a una Reunión de</div><div class="t" style="left:79.60px;top:371.00px;font-size:8.1px;line-height:10.125px;color:#111;transform:scaleX(1.0300);word-spacing:2.514px;letter-spacing:0.12px;-webkit-text-stroke:0.08px #000">Trabajo con los señores vocales, para tratar el tema sobre el proyecto</div><div class="t" style="left:79.60px;top:381.00px;font-size:8.1px;line-height:10.125px;color:#111;transform:scaleX(0.9061);letter-spacing:0.12px;-webkit-text-stroke:0.08px #000">“ADECUACIÓN DEL PISO PARA CANCHA DE USO MÚLTIPLE EN LA CUBIERTA TIPO</div><div class="t" style="left:79.60px;top:391.00px;font-size:8.1px;line-height:10.125px;color:#111;transform:scaleX(0.8938);letter-spacing:0.12px;-webkit-text-stroke:0.08px #000">COLISEO DEL RECINTO FERIAL DE LA PARROQUIA VALLE HERMOSO”</div><div class="t" style="left:79.60px;top:408.00px;font-size:8.1px;line-height:10.125px;color:#111;transform:scaleX(1.0300);word-spacing:1.475px;letter-spacing:0.12px;-webkit-text-stroke:0.08px #000">Esperando contar con vuestra favorable atención al presente, anticipamos</div><div class="t" style="left:79.60px;top:418.00px;font-size:8.1px;line-height:10.125px;color:#111;transform:scaleX(1.0028);letter-spacing:0.12px;-webkit-text-stroke:0.08px #000">nuestros sinceros agradecimientos de alta consideración y estima personal.</div><div class="t" style="left:79.60px;top:449.00px;font-size:8.1px;line-height:10.125px;color:#111;transform:scaleX(1.0767);letter-spacing:0.12px;-webkit-text-stroke:0.08px #000">Atentamente,</div><div class="t" style="left:641.30px;top:210.00px;font-size:8.1px;line-height:10.125px;color:#111;transform:scaleX(0.9402);font-weight:bold;letter-spacing:0.12px;-webkit-text-stroke:0.08px #000">Oficio N° 176 GADPRVH-O-WMC-08-2022.</div><div class="t" style="left:653.20px;top:220.00px;font-size:8.1px;line-height:10.125px;color:#111;transform:scaleX(0.9862);letter-spacing:0.12px;-webkit-text-stroke:0.08px #000">Valle Hermoso, 03 de agosto del 2022.</div><div class="t" style="left:501.00px;top:240.00px;font-size:8.1px;line-height:10.125px;color:#111;transform:scaleX(0.9935);letter-spacing:0.12px;-webkit-text-stroke:0.08px #000">Sr. Villaprado Pinargote José Jabier</div><div class="t" style="left:501.00px;top:250.00px;font-size:8.1px;line-height:10.125px;color:#111;transform:scaleX(0.9339);letter-spacing:0.12px;-webkit-text-stroke:0.08px #000">Presente.-</div><div class="t" style="left:501.00px;top:270.00px;font-size:8.1px;line-height:10.125px;color:#111;transform:scaleX(1.0258);letter-spacing:0.12px;-webkit-text-stroke:0.08px #000">De mi consideración:</div><div class="t" style="left:501.00px;top:296.00px;font-size:8.1px;line-height:10.125px;color:#111;transform:scaleX(1.0300);word-spacing:0.291px;letter-spacing:0.12px;-webkit-text-stroke:0.08px #000">En nombre de quienes conformamos el Gobierno Autónomo Descentralizado</div><div class="t" style="left:501.00px;top:306.00px;font-size:8.1px;line-height:10.125px;color:#111;transform:scaleX(1.0300);word-spacing:2.663px;letter-spacing:0.12px;-webkit-text-stroke:0.08px #000">Parroquial Rural Valle Hermoso, reciba un cordial y respetuoso saludo,</div><div class="t" style="left:501.00px;top:316.00px;font-size:8.1px;line-height:10.125px;color:#111;transform:scaleX(0.9911);letter-spacing:0.12px;-webkit-text-stroke:0.08px #000">deseándole los mayores de los éxitos en sus funciones diarias encomendadas.</div><div class="t" style="left:501.00px;top:331.00px;font-size:8.1px;line-height:10.125px;color:#111;transform:scaleX(1.0300);word-spacing:1.600px;letter-spacing:0.12px;-webkit-text-stroke:0.08px #000">Mediante el presente me permito SOLICITAR a usted, de la manera más</div><div class="t" style="left:501.00px;top:341.00px;font-size:8.1px;line-height:10.125px;color:#111;transform:scaleX(0.9876);letter-spacing:0.12px;-webkit-text-stroke:0.08px #000">comedida desocupe el inmueble DONDE FUNCIONÓ EL CENTRO ARTESANAL</div><div class="t" style="left:501.00px;top:352.00px;font-size:8.1px;line-height:10.125px;color:#111;transform:scaleX(1.0044);letter-spacing:0.12px;-webkit-text-stroke:0.08px #000">VALLE HERMOSO,  debido a que se realizó un compromiso con su persona, el</div><div class="t" style="left:501.00px;top:362.00px;font-size:8.1px;line-height:10.125px;color:#111;transform:scaleX(1.0264);letter-spacing:0.12px;-webkit-text-stroke:0.08px #000">cual no lo está cumpliendo.</div><div class="t" style="left:501.00px;top:377.00px;font-size:8.1px;line-height:10.125px;color:#111;transform:scaleX(1.0055);letter-spacing:0.12px;-webkit-text-stroke:0.08px #000">Uno de los compromisos fue cuidar durante el día y la noche; de lo cual el área</div><div class="t" style="left:501.00px;top:388.00px;font-size:8.1px;line-height:10.125px;color:#111;transform:scaleX(1.0300);word-spacing:2.556px;letter-spacing:0.12px;-webkit-text-stroke:0.08px #000">mencionada se ha encontrado abandonado en algunas ocasiones y sin</div><div class="t" style="left:501.00px;top:398.00px;font-size:8.1px;line-height:10.125px;color:#111;transform:scaleX(1.0300);word-spacing:5.134px;letter-spacing:0.12px;-webkit-text-stroke:0.08px #000">seguridad, el candado colocado totalmente abierto, adicional queda</div><div class="t" style="left:501.00px;top:408.00px;font-size:8.1px;line-height:10.125px;color:#111;transform:scaleX(1.0300);word-spacing:0.048px;letter-spacing:0.12px;-webkit-text-stroke:0.08px #000">prohibida la crianza de aves de corral. Así como también solo pueden habitar</div><div class="t" style="left:501.00px;top:417.00px;font-size:8.1px;line-height:10.125px;color:#111;transform:scaleX(0.9808);letter-spacing:0.12px;-webkit-text-stroke:0.08px #000">dos personas.</div><div class="t" style="left:501.00px;top:442.00px;font-size:8.1px;line-height:10.125px;color:#111;transform:scaleX(1.0017);letter-spacing:0.12px;-webkit-text-stroke:0.08px #000">Cabe recalcar que existen materiales y maquinaria que se encuentre dentro del</div><div class="t" style="left:501.00px;top:452.00px;font-size:8.1px;line-height:10.125px;color:#111;transform:scaleX(1.0220);letter-spacing:0.12px;-webkit-text-stroke:0.08px #000">bien inmueble, incluyendo los destinados para la Fábrica de adoquines; por lo</div><div class="t" style="left:672.40px;top:423.00px;font-size:12.5px;line-height:15.625px;color:rgba(160,160,160,0.75);transform:scaleX(1.0282);">Activar Windows</div><div class="t" style="left:671.30px;top:439.00px;font-size:10px;line-height:12.5px;color:rgba(160,160,160,0.75);transform:scaleX(0.9604);">Ve a Configuración para activar Windows.</div>
</body></html>
